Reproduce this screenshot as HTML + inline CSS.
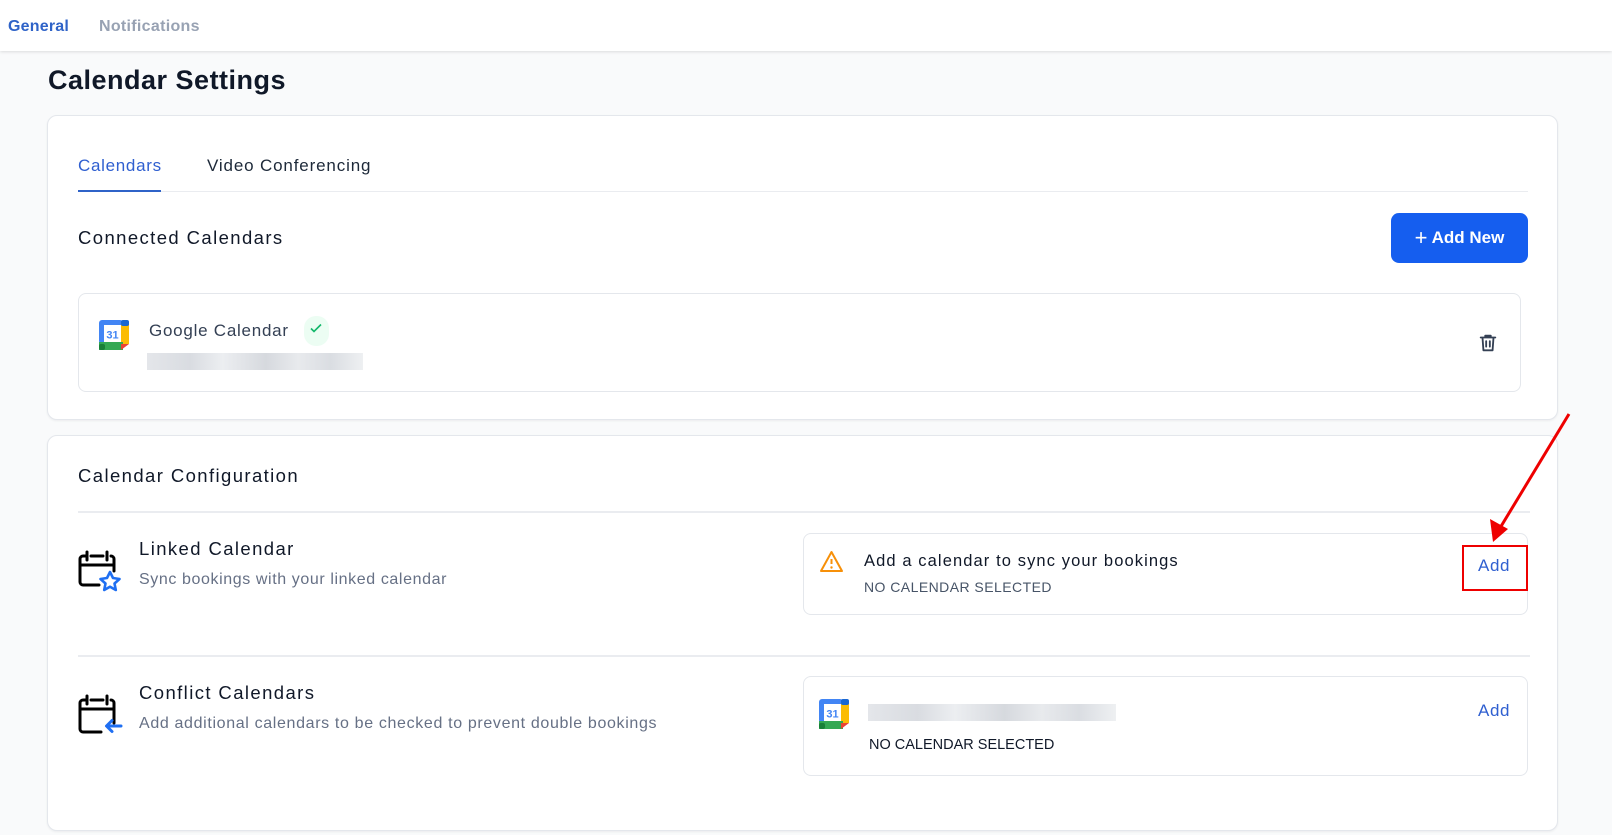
<!DOCTYPE html>
<html><head><meta charset="utf-8"><style>
*{margin:0;padding:0;box-sizing:border-box}
body{width:1612px;height:835px;background:#f9fafb;font-family:"Liberation Sans",sans-serif;position:relative;overflow:hidden;color:#101828}
.a{position:absolute;white-space:nowrap}
.card{position:absolute;background:#fff;border:1px solid #e4e7ec;border-radius:10px;box-shadow:0 1px 2px rgba(16,24,40,.06)}
.blur{position:absolute;background:linear-gradient(90deg,#e4e6ea,#d9dce1 20%,#eceef1 35%,#d6d9de 55%,#e8eaed 70%,#dadde2 85%,#eef0f2)}
.add{color:#2f5fd0;font-size:17px;letter-spacing:.6px}
.h{font-size:18.5px;color:#101828;letter-spacing:1.4px}
.s{font-size:16px;color:#667085;letter-spacing:.6px}
</style></head><body>
<div class="a" style="left:0;top:0;width:1612px;height:51px;background:#fff;box-shadow:0 1px 3px rgba(0,0,0,.12)"></div>
<div class="a" style="left:8px;top:18px;font-size:16px;font-weight:bold;color:#2f63c8;letter-spacing:.2px">General</div>
<div class="a" style="left:99px;top:18px;font-size:16px;font-weight:bold;color:#98a2b3;letter-spacing:.3px">Notifications</div>
<div class="a" style="left:48px;top:65px;font-size:27px;font-weight:bold;color:#101828;letter-spacing:.5px">Calendar Settings</div>

<div class="card" style="left:47px;top:115px;width:1511px;height:305px"></div>
<div class="a" style="left:78px;top:156px;font-size:17px;color:#2f5fd0;letter-spacing:.7px">Calendars</div>
<div class="a" style="left:207px;top:156px;font-size:17px;color:#1d2939;letter-spacing:.85px">Video Conferencing</div>
<div class="a" style="left:78px;top:191px;width:1450px;height:1px;background:#eaecf0"></div>
<div class="a" style="left:78px;top:190px;width:83px;height:2px;background:#2f63c8"></div>
<div class="a h" style="left:78px;top:227px">Connected Calendars</div>
<div class="a" style="left:1391px;top:213px;width:137px;height:50px;background:#155eef;border-radius:8px;color:#fff;font-size:17px;font-weight:bold;line-height:50px;text-align:center"><span style="font-weight:normal;font-size:22px;vertical-align:-2px">+</span> Add New</div>

<div class="card" style="left:78px;top:293px;width:1443px;height:99px;border-radius:8px;box-shadow:none"></div>
<svg class="a" style="left:99px;top:320px" width="30" height="30" viewBox="0 0 30 30">
<rect x="0" y="0" width="24" height="24" rx="3" fill="#4285f4"/><rect x="22" y="4" width="8" height="20" fill="#fbbc04"/><rect x="22" y="0" width="8" height="6" rx="2" fill="#1967d2"/><rect x="0" y="22" width="24" height="8" fill="#34a853"/><rect x="0" y="24" width="6" height="6" rx="2" fill="#188038"/><polygon points="22,24 30,24 22,30" fill="#ea4335"/><rect x="5" y="5" width="17" height="17" fill="#fff"/><text x="13.5" y="18.5" font-size="11" font-weight="bold" fill="#4285f4" text-anchor="middle" font-family="Liberation Sans,sans-serif">31</text></svg>
<div class="a" style="left:149px;top:321px;font-size:17px;color:#344054;letter-spacing:.75px">Google Calendar</div>
<div class="a" style="left:304px;top:316px;width:25px;height:30px;border-radius:12px;background:#ecfdf3"></div>
<svg class="a" style="left:308px;top:320px" width="16" height="16" viewBox="0 0 16 16"><path d="M3 8.5l3 3 7-7" stroke="#12b76a" stroke-width="1.6" fill="none"/></svg>
<div class="blur" style="left:147px;top:353px;width:216px;height:17px"></div>
<svg class="a" style="left:1477px;top:332px" width="22" height="22" viewBox="0 0 24 24" fill="none" stroke="#344054" stroke-width="2" stroke-linecap="round" stroke-linejoin="round"><path d="M4 6h16M9 6V4h6v2M6 6l1 14h10l1-14M10 10v6M14 10v6"/></svg>

<div class="card" style="left:47px;top:435px;width:1511px;height:396px"></div>
<div class="a h" style="left:78px;top:465px">Calendar Configuration</div>
<div class="a" style="left:78px;top:511px;width:1452px;height:2px;background:#eaecf0"></div>

<svg class="a" style="left:77px;top:550px" width="46" height="44" viewBox="0 0 46 44">
<path d="M10 6H6a3 3 0 0 0-3 3v23a3 3 0 0 0 3 3h16M3 15h34M34 6a3 3 0 0 1 3 3v12M10 2v8M30 2v8M14 6h12" stroke="#000" stroke-width="3" fill="none" stroke-linecap="round"/>
<path d="M33 22l3 6 6.5 1-5 4.5 1.3 6.5-5.8-3.3-5.8 3.3 1.3-6.5-5-4.5 6.5-1z" fill="#fff" stroke="#1f6ff2" stroke-width="2.6" stroke-linejoin="round"/></svg>
<div class="a h" style="left:139px;top:538px">Linked Calendar</div>
<div class="a s" style="left:139px;top:571px">Sync bookings with your linked calendar</div>

<div class="card" style="left:803px;top:533px;width:725px;height:82px;border-radius:8px;box-shadow:none"></div>
<svg class="a" style="left:819px;top:550px" width="25" height="23" viewBox="0 0 25 23"><path d="M12.5 2L23 21H2z" stroke="#f79009" stroke-width="2" fill="none" stroke-linejoin="round"/><path d="M12.5 9v5" stroke="#f79009" stroke-width="2"/><circle cx="12.5" cy="17.5" r="1.2" fill="#f79009"/></svg>
<div class="a" style="left:864px;top:552px;font-size:16.5px;color:#101828;letter-spacing:1.1px">Add a calendar to sync your bookings</div>
<div class="a" style="left:864px;top:579px;font-size:14px;color:#475467;letter-spacing:.45px">NO CALENDAR SELECTED</div>
<div class="a add" style="left:1478px;top:556px">Add</div>
<div class="a" style="left:1462px;top:545px;width:66px;height:46px;border:2.5px solid #e00"></div>
<svg class="a" style="left:1480px;top:405px" width="100" height="145"><path d="M89 9L17 128" stroke="#e00" stroke-width="3"/><polygon points="13,137 10,114 28,124" fill="#e00"/></svg>

<div class="a" style="left:78px;top:655px;width:1452px;height:2px;background:#eaecf0"></div>
<svg class="a" style="left:77px;top:694px" width="46" height="44" viewBox="0 0 46 44">
<path d="M10 6H6a3 3 0 0 0-3 3v26a3 3 0 0 0 3 3h18M3 15h34M34 6a3 3 0 0 1 3 3v20M10 2v8M30 2v8M14 6h12" stroke="#000" stroke-width="3" fill="none" stroke-linecap="round"/>
<path d="M44 32H30M35 26.5l-5.5 5.5 5.5 5.5" stroke="#1f6ff2" stroke-width="3" fill="none" stroke-linecap="round" stroke-linejoin="round"/></svg>
<div class="a h" style="left:139px;top:682px">Conflict Calendars</div>
<div class="a s" style="left:139px;top:715px;letter-spacing:.65px">Add additional calendars to be checked to prevent double bookings</div>

<div class="card" style="left:803px;top:676px;width:725px;height:100px;border-radius:8px;box-shadow:none"></div>
<svg class="a" style="left:819px;top:699px" width="30" height="30" viewBox="0 0 30 30">
<rect x="0" y="0" width="24" height="24" rx="3" fill="#4285f4"/><rect x="22" y="4" width="8" height="20" fill="#fbbc04"/><rect x="22" y="0" width="8" height="6" rx="2" fill="#1967d2"/><rect x="0" y="22" width="24" height="8" fill="#34a853"/><rect x="0" y="24" width="6" height="6" rx="2" fill="#188038"/><polygon points="22,24 30,24 22,30" fill="#ea4335"/><rect x="5" y="5" width="17" height="17" fill="#fff"/><text x="13.5" y="18.5" font-size="11" font-weight="bold" fill="#4285f4" text-anchor="middle" font-family="Liberation Sans,sans-serif">31</text></svg>
<div class="blur" style="left:868px;top:704px;width:248px;height:17px"></div>
<div class="a" style="left:869px;top:737px;font-size:14.5px;color:#101828">NO CALENDAR SELECTED</div>
<div class="a add" style="left:1478px;top:701px">Add</div>
</body></html>
